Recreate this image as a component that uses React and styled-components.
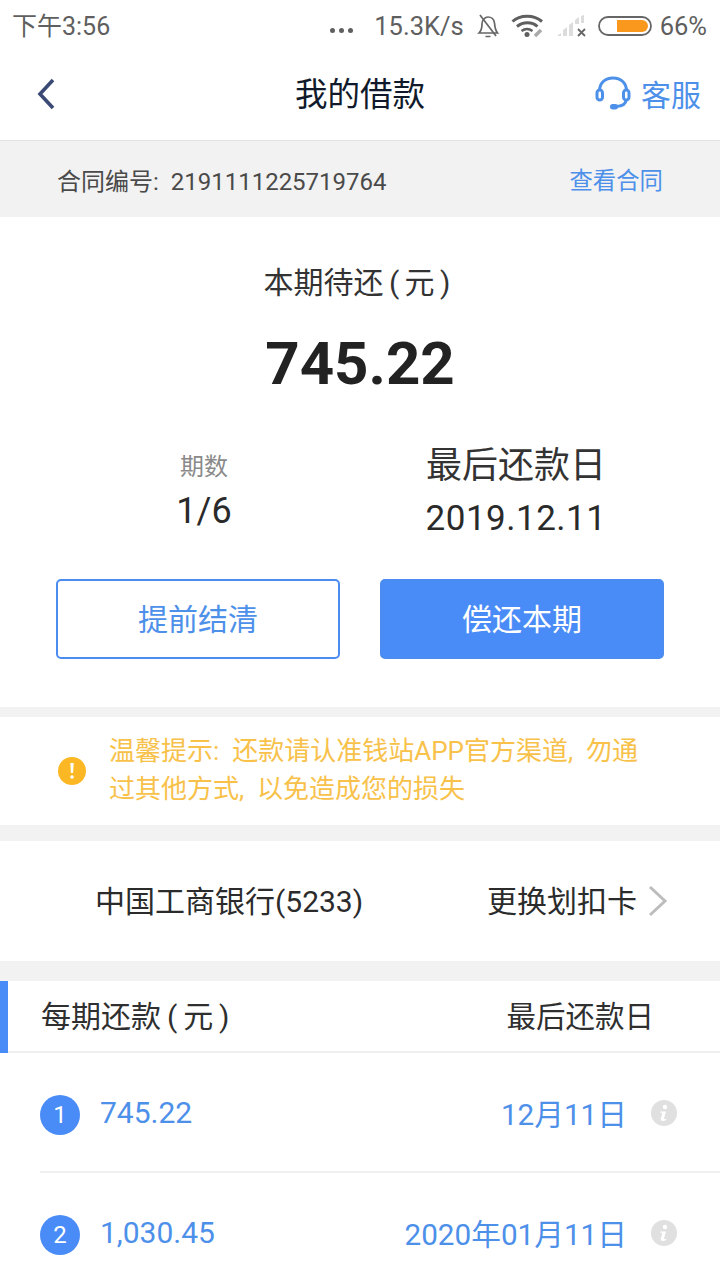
import React from "react";
import styled, { createGlobalStyle } from "styled-components";

const Global = createGlobalStyle`
  html, body { margin: 0; padding: 0; background: #fff; }
  body { font-family: Roboto, "Noto Sans CJK SC", sans-serif; }
  #root { width: 720px; height: 1280px; overflow: hidden; }
`;
const Page = styled.div`width: 720px; height: 1280px; overflow: hidden; background: #f2f2f2; display: flex; flex-direction: column; & > * { flex-shrink: 0; }`;
const StatusBar = styled.div`height: 52px; background: #fff; display: flex; align-items: center; padding: 0 13px 0 12px; color: #5f5f5f; font-size: 25.500px; box-sizing: border-box;`;
const StatusTime = styled.span`flex: 1; font-size: 25px; margin-top: -5px;`;
const StatusRight = styled.div`display: flex; align-items: center;`;
const Dots = styled.span`display: flex; gap: 4px; margin-right: 21px; margin-top: 9px; i { width: 5px; height: 5px; border-radius: 50%; background: #5f5f5f; display: block; }`;
const Speed = styled.span`margin-right: 12px;`;
const Pct = styled.span`margin-left: 8px;`;
const IconGap = styled.span`width: ${p => p.$w}px;`;
const Header = styled.div`height: 84px; background: #fff; border-bottom: 1px solid #e2e2e2; display: flex; align-items: center; justify-content: space-between; padding: 0 19px 4px 36px; position: relative;`;
const HeaderSlot = styled.div`display: flex; align-items: center;`;
const Title = styled.div`position: absolute; left: 0; right: 0; top: 0; text-align: center; font-size: 32.500px; color: #111a2b; line-height: 86px;`;
const Service = styled.div`display: flex; align-items: center; gap: 10px; color: #4d90ea; font-size: 30px; margin-top: -2px;`;
const Contract = styled.div`height: 76px; background: #f2f2f2; display: flex; align-items: center; justify-content: space-between; padding: 0 57px 0 57px; font-size: 24px; color: #4a4a4a;`;
const LinkText = styled.span`color: #4d90ea; font-size: 23.400px;`;
const Main = styled.div`height: 490px; background: #fff; display: flex; flex-direction: column; align-items: center; margin-bottom: 10px;`;
const MainLabel = styled.div`font-size: 30px; color: #333; margin: 46px 6px 0 0; line-height: 40px; word-spacing: -2px;`;
const Amount = styled.div`font-size: 60px; font-weight: 700; color: #222; line-height: 72px; margin-top: 25px;`;
const Stats = styled.div`display: grid; grid-template-columns: 408px 216px; width: 100%; margin-top: 42px; justify-content: start;`;
const Stat = styled.div`display: flex; flex-direction: column; align-items: center;`;
const StatLabel = styled.div`font-size: ${p => p.$big ? 36 : 24}px; color: ${p => p.$big ? "#333" : "#8a8a8a"}; line-height: ${p => p.$big ? 46 : 34}px; margin-top: ${p => p.$big ? 1 : 8}px; white-space: nowrap;`;
const StatValue = styled.div`font-size: ${p => p.$big ? 35 : 36}px; color: #2a2a2a; line-height: 46px; margin-top: ${p => p.$big ? 7 : 4}px; letter-spacing: ${p => p.$big ? ".5px" : "0"}; white-space: nowrap;`;
const Buttons = styled.div`display: flex; gap: 40px; margin-top: 37px;`;
const Button = styled.div`width: 284px; height: 80px; box-sizing: border-box; border-radius: 5px; display: flex; align-items: center; justify-content: center; font-size: 30px; padding-bottom: 4px; border: 2px solid #4a8cf0; color: ${p => p.$solid ? "#fff" : "#4d90ea"}; background: ${p => p.$solid ? "#4a8cf7" : "#fff"};`;
const Notice = styled.div`height: 108px; background: #fff; margin-bottom: 16px; display: flex; align-items: center; padding-left: 58px; gap: 23px;`;
const NoticeText = styled.div`font-size: 26px; line-height: 38px; color: #f8c14a; width: 540px; margin-top: -3px;`;
const Bank = styled.div`height: 120px; background: #fff; margin-bottom: 20px; display: flex; align-items: center; justify-content: space-between; padding: 0 52px 0 95px; font-size: 30px; color: #2b2b2b;`;
const BankRight = styled.div`display: flex; align-items: center; gap: 11px;`;
const BankText = styled.span`margin-top: -4px;`;
const TableHead = styled.div`height: 70px; background: #fff; border-bottom: 2px solid #eeeeee; display: flex; align-items: center; justify-content: space-between; padding: 0 66px 0 41px; font-size: 30px; color: #2f2f2f; position: relative;`;
const HeadLeft = styled.span`margin-top: -4px; word-spacing: -1.500px;`;
const HeadRight = styled.span`margin-top: -4px; font-size: 29.500px;`;
const Accent = styled.i`position: absolute; left: 0; top: 0; bottom: -2px; width: 8px; background: #4a8cf7;`;
const Rows = styled.div`background: #fff; flex: 1; padding-left: 40px;`;
const Row = styled.div`height: 118px; border-bottom: 2px solid ${p => p.$last ? "transparent" : "#f0f0f0"}; display: flex; align-items: center; padding-right: 43px; font-size: 30px; color: #4d90ea;`;
const Badge = styled.span`width: 40px; height: 40px; border-radius: 50%; background: #4a8cf7; color: #fff; font-size: 24px; display: flex; align-items: center; justify-content: center; margin-right: 20px; margin-top: 5px;`;
const RowAmount = styled.span`flex: 1; margin-top: 1px;`;
const RowDate = styled.span`margin-right: 24px; font-size: 29.700px;`;
const InfoSlot = styled.span`display: flex; margin-top: 2px;`;

const Back = () => (
  <svg width="20" height="32" viewBox="0 0 20 32"><path d="M17 2 4 16l13 14" fill="none" stroke="#3a4a75" strokeWidth="3.600" /></svg>
);
const Headset = () => (
  <svg width="36" height="34" viewBox="0 0 36 34" fill="none">
    <path d="M4.500 15C4.500 7 10 2 18 2s13.500 5 13.500 13" stroke="#4d90ea" strokeWidth="3" />
    <rect x="2" y="14" width="5.500" height="10" rx="2.750" stroke="#4d90ea" strokeWidth="3" />
    <rect x="28.500" y="14" width="5.500" height="10" rx="2.750" stroke="#4d90ea" strokeWidth="3" />
    <path d="M31 24c0 4-4 6-10 6.500" stroke="#4d90ea" strokeWidth="3" />
    <rect x="15" y="28" width="8" height="5.500" rx="2.750" fill="#4d90ea" />
  </svg>
);
const Bell = () => (
  <svg width="24" height="26" viewBox="0 0 24 26" fill="none" stroke="#666" strokeWidth="1.700">
    <path d="M3 20c3-3 3-7 3-9 0-4 3-7 6-7s6 2 6.500 6c.4 4 .5 7 3 10zM9.500 23.500h5" />
    <path d="M4 2l16 21" />
  </svg>
);
const Wifi = () => (
  <svg width="34" height="24" viewBox="0 0 34 24" fill="none">
    <path d="M1.500 7.500C9 .5 23 .5 31 7.500" stroke="#5f5f5f" strokeWidth="3" />
    <path d="M6 12.500c6-5 15-5 20.500 0" stroke="#5f5f5f" strokeWidth="3" />
    <path d="M10.500 17c3.500-2.500 7.500-2.500 11 0" stroke="#5f5f5f" strokeWidth="2.500" />
    <circle cx="16" cy="20.500" r="2.500" fill="#5f5f5f" />
    <path d="M24 22l6-6" stroke="#aaa" strokeWidth="3.500" />
  </svg>
);
const Signal = () => (
  <svg width="32" height="22" viewBox="0 0 32 22">
    <path d="M1 21l4-3v3zM7 21v-6l4-3v9zM13 21V10l4-3v14zM19 21V5l4-3v7h-4zM25 8V1l3-1v8z" fill="#dcdcdc" />
    <path d="M22 14l7 7M29 14l-7 7" stroke="#666" strokeWidth="1.800" />
  </svg>
);
const Battery = () => (
  <svg width="54" height="20" viewBox="0 0 54 20">
    <rect x="1" y="1" width="52" height="18" rx="9" fill="#fff" stroke="#666" strokeWidth="1.800" />
    <path d="M19 4h25a6 6 0 0 1 0 12H19z" fill="#f9981c" />
  </svg>
);
const Warn = () => (
  <svg width="28" height="28" viewBox="0 0 28 28">
    <circle cx="14" cy="14" r="14" fill="#fbb824" />
    <path d="M12.300 6h3.400l-.6 10h-2.200z" fill="#fff" />
    <circle cx="14" cy="20" r="1.800" fill="#fff" />
  </svg>
);
const Chevron = () => (
  <svg width="20" height="32" viewBox="0 0 20 32"><path d="M2 2l15 14L2 30" fill="none" stroke="#bdbdbd" strokeWidth="3" /></svg>
);
const Info = () => (
  <svg width="26" height="26" viewBox="0 0 26 26">
    <circle cx="13" cy="13" r="13" fill="#e0e0e0" />
    <circle cx="14" cy="7" r="2.200" fill="#fff" />
    <path d="M9.500 11.500h5.500l-2 7c0 .8.800.8 2.500 0l-.3 1.500c-3 1.500-6 1.200-5.500-1l1.700-6H9.500z" fill="#fff" />
  </svg>
);

export default function App() {
  return (
    <Page>
      <Global />
      <StatusBar>
        <StatusTime>下午3:56</StatusTime>
        <StatusRight>
          <Dots><i /><i /><i /></Dots>
          <Speed>15.3K/s</Speed>
          <Bell />
          <IconGap $w={11} />
          <Wifi />
          <IconGap $w={11} />
          <Signal />
          <IconGap $w={10} />
          <Battery />
          <Pct>66%</Pct>
        </StatusRight>
      </StatusBar>
      <Header>
        <HeaderSlot><Back /></HeaderSlot>
        <Title>我的借款</Title>
        <Service><Headset />客服</Service>
      </Header>
      <Contract>
        <span>合同编号:{"\u00a0\u00a0"}2191111225719764</span>
        <LinkText>查看合同</LinkText>
      </Contract>
      <Main>
        <MainLabel>本期待还 ( 元 )</MainLabel>
        <Amount>745.22</Amount>
        <Stats>
          <Stat>
            <StatLabel>期数</StatLabel>
            <StatValue>1/6</StatValue>
          </Stat>
          <Stat>
            <StatLabel $big>最后还款日</StatLabel>
            <StatValue $big>2019.12.11</StatValue>
          </Stat>
        </Stats>
        <Buttons>
          <Button>提前结清</Button>
          <Button $solid>偿还本期</Button>
        </Buttons>
      </Main>
      <Notice>
        <Warn />
        <NoticeText>温馨提示:{"\u00a0\u00a0"}还款请认准钱站APP官方渠道,{"\u00a0\u00a0"}勿通过其他方式,{"\u00a0\u00a0"}以免造成您的损失</NoticeText>
      </Notice>
      <Bank>
        <BankText>中国工商银行(5233)</BankText>
        <BankRight><BankText>更换划扣卡</BankText><Chevron /></BankRight>
      </Bank>
      <TableHead>
        <Accent />
        <HeadLeft>每期还款 ( 元 )</HeadLeft>
        <HeadRight>最后还款日</HeadRight>
      </TableHead>
      <Rows>
        <Row>
          <Badge>1</Badge>
          <RowAmount>745.22</RowAmount>
          <RowDate>12月11日</RowDate>
          <InfoSlot><Info /></InfoSlot>
        </Row>
        <Row $last>
          <Badge>2</Badge>
          <RowAmount>1,030.45</RowAmount>
          <RowDate>2020年01月11日</RowDate>
          <InfoSlot><Info /></InfoSlot>
        </Row>
      </Rows>
    </Page>
  );
}
